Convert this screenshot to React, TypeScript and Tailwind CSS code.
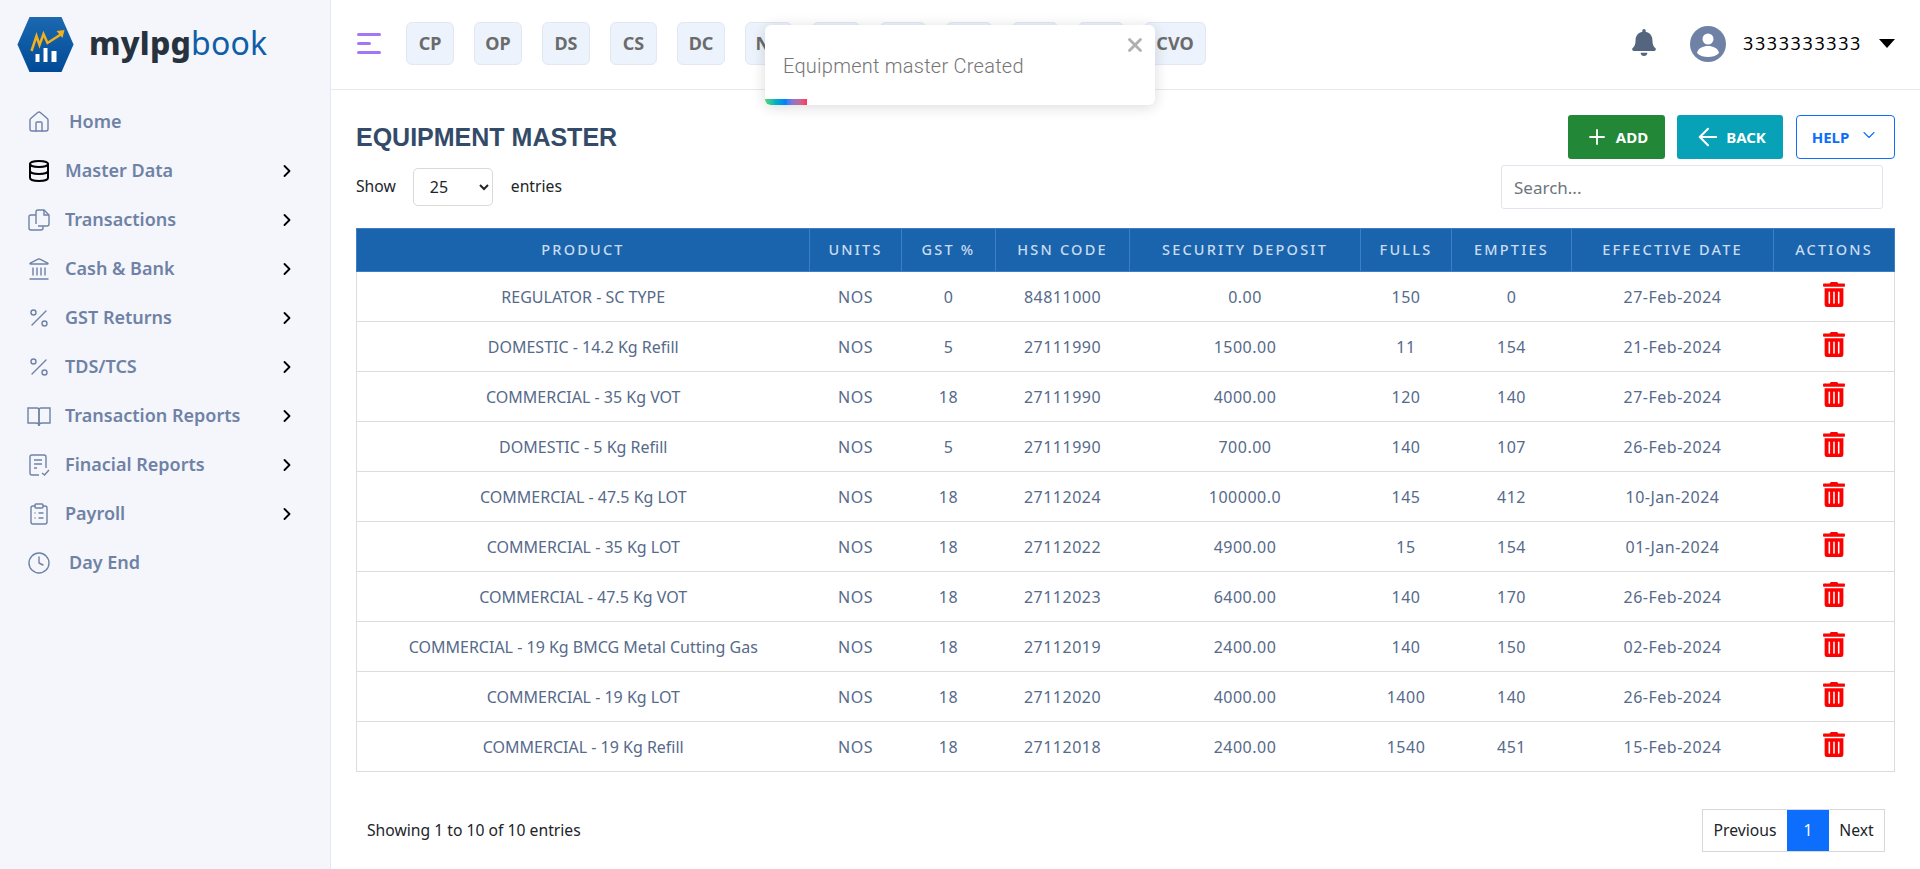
import { ArrowLeft, ChevronDown, ChevronRight, ClipboardList, Clock, Database, House, Landmark, Percent, Plus, X } from "lucide-react";
import { FaBell, FaTrashAlt } from "react-icons/fa";

const sans = "font-['Noto_Sans',sans-serif]";

type IconProps = { className?: string; strokeWidth?: number };

function CopyDocIcon({ className, strokeWidth }: IconProps) {
  return (
    <svg viewBox="0 0 24 24" fill="none" stroke="currentColor" strokeWidth={strokeWidth} className={className}>
      <path d="M9 16V4a2 2 0 0 1 2-2h6l5 5v9a2 2 0 0 1-2 2h-9" />
      <path d="M9 7H4a2 2 0 0 0-2 2v11a2 2 0 0 0 2 2h10a2 2 0 0 0 2-2v-2" />
      <path d="M17 2v5h5" />
    </svg>
  );
}

function OpenBookIcon({ className, strokeWidth }: IconProps) {
  return (
    <svg viewBox="0 0 24 24" fill="none" stroke="currentColor" strokeWidth={strokeWidth} className={className}>
      <path d="M12 22V6a2 2 0 0 0-2-2H1v15h8a3 3 0 0 1 3 3Z" />
      <path d="M12 22V6a2 2 0 0 1 2-2h9v15h-8a3 3 0 0 0-3 3Z" />
    </svg>
  );
}

function FileCheckIcon({ className, strokeWidth }: IconProps) {
  return (
    <svg viewBox="0 0 24 24" fill="none" stroke="currentColor" strokeWidth={strokeWidth} className={className}>
      <path d="M12 22H5a2 2 0 0 1-2-2V4a2 2 0 0 1 2-2h12a2 2 0 0 1 2 2v11" />
      <path d="M7 7h8M7 11h8M7 15h3" />
      <path d="m15 20 2.500 2L22 17" />
    </svg>
  );
}

const menu = [
  { label: "Home", icon: House, plain: true },
  { label: "Master Data", icon: Database, dark: true },
  { label: "Transactions", icon: CopyDocIcon },
  { label: "Cash & Bank", icon: Landmark },
  { label: "GST Returns", icon: Percent },
  { label: "TDS/TCS", icon: Percent },
  { label: "Transaction Reports", icon: OpenBookIcon },
  { label: "Finacial Reports", icon: FileCheckIcon },
  { label: "Payroll", icon: ClipboardList },
  { label: "Day End", icon: Clock, plain: true },
];

const chips = [
  { label: "CP", w: "w-[48px]" },
  { label: "OP", w: "w-[48px]" },
  { label: "DS", w: "w-[48px]" },
  { label: "CS", w: "w-[47px]" },
  { label: "DC", w: "w-[48px]" },
  { label: "NC", w: "w-[47px]" },
  { label: "", w: "w-[48px]" },
  { label: "", w: "w-[46px]" },
  { label: "", w: "w-[46px]" },
  { label: "", w: "w-[46px]" },
  { label: "", w: "w-[46px]" },
  { label: "CVO", w: "w-[62px]" },
];

const headers = ["Product", "Units", "GST %", "HSN Code", "Security Deposit", "Fulls", "Empties", "Effective Date", "Actions"];
const widths = ["w-[453px]", "w-[92px]", "w-[94px]", "w-[134px]", "w-[231px]", "w-[91px]", "w-[120px]", "w-[202px]", "w-[121px]"];

const rows = [
  ["REGULATOR - SC TYPE", "NOS", "0", "84811000", "0.00", "150", "0", "27-Feb-2024"],
  ["DOMESTIC - 14.2 Kg Refill", "NOS", "5", "27111990", "1500.00", "11", "154", "21-Feb-2024"],
  ["COMMERCIAL - 35 Kg VOT", "NOS", "18", "27111990", "4000.00", "120", "140", "27-Feb-2024"],
  ["DOMESTIC - 5 Kg Refill", "NOS", "5", "27111990", "700.00", "140", "107", "26-Feb-2024"],
  ["COMMERCIAL - 47.5 Kg LOT", "NOS", "18", "27112024", "100000.0", "145", "412", "10-Jan-2024"],
  ["COMMERCIAL - 35 Kg LOT", "NOS", "18", "27112022", "4900.00", "15", "154", "01-Jan-2024"],
  ["COMMERCIAL - 47.5 Kg VOT", "NOS", "18", "27112023", "6400.00", "140", "170", "26-Feb-2024"],
  ["COMMERCIAL - 19 Kg BMCG Metal Cutting Gas", "NOS", "18", "27112019", "2400.00", "140", "150", "02-Feb-2024"],
  ["COMMERCIAL - 19 Kg LOT", "NOS", "18", "27112020", "4000.00", "1400", "140", "26-Feb-2024"],
  ["COMMERCIAL - 19 Kg Refill", "NOS", "18", "27112018", "2400.00", "1540", "451", "15-Feb-2024"],
];

function Logo() {
  return (
    <svg viewBox="0 0 58 57" className="w-[59px] h-[57px] shrink-0">
      <defs>
        <linearGradient id="hex" x1="0" y1="0" x2="0" y2="1">
          <stop offset="0" stopColor="#1c69b0" />
          <stop offset="1" stopColor="#014a97" />
        </linearGradient>
      </defs>
      <path d="M13 1h32l12 27.500L45 56H13L1 28.500Z" fill="url(#hex)" />
      <path d="M19 38h4v8h-4zM27 32h4v14h-4zM35 35h5v11h-5z" fill="#fff" />
      <path d="m15 35 5-15 3 9 4-11 4 9 14-9" fill="none" stroke="#f2b01e" strokeWidth="2.500" />
      <path d="m40 15 8-1-2 8Z" fill="#f2b01e" />
    </svg>
  );
}

function Sidebar() {
  return (
    <aside className="w-[331px] shrink-0 bg-[#f4f6fb] border-r border-[#e6e8f0]">
      <div className="flex items-center h-[90px] pl-[16px] pb-[2px]">
        <Logo />
        <span className={`ml-[14px] mb-[2px] text-[32px] leading-none tracking-[0.2px] ${sans}`}>
          <span className="font-extrabold text-[#27323f]">mylpg</span>
          <span className="text-[#0f5ea8]">book</span>
        </span>
      </div>
      <nav className="flex flex-col pt-[7px]">
        {menu.map((item) => (
          <div key={item.label} className="flex items-center h-[49px]">
            <item.icon
              className={`ml-[27px] w-[24px] h-[24px] shrink-0 ${item.dark ? "text-black" : "text-[#6f82a6]"}`}
              strokeWidth={item.dark ? 2 : 1.4}
            />
            <span className={`${item.plain ? "ml-[18px]" : "ml-[14px]"} text-[18px] font-semibold text-[#6f82a6] ${sans}`}>
              {item.label}
            </span>
            {!item.plain && <ChevronRight className="ml-auto mr-[33px] w-[20px] h-[20px] text-black" strokeWidth={2.2} />}
          </div>
        ))}
      </nav>
    </aside>
  );
}

function Topbar() {
  return (
    <header className="relative flex items-center h-[90px] pl-[26px] pr-[25px] border-b border-[#e8e8ef] pb-[2px]">
      <div className="flex flex-col gap-[6px] w-[24px] mr-[25px]">
        <span className="h-[3px] w-[24px] rounded-full bg-[#a475f5]" />
        <span className="h-[3px] w-[14px] rounded-full bg-[#a475f5]" />
        <span className="h-[3px] w-[24px] rounded-full bg-[#a475f5]" />
      </div>
      <div className="flex gap-[20px]">
        {chips.map((c, i) => (
          <div
            key={i}
            className={`${c.w} h-[43px] flex items-center justify-center rounded-[6px] bg-[#edf3fc] border border-[#e2e8f2] text-[18px] font-bold text-[#6b6b6b] ${sans}`}
          >
            {c.label}
          </div>
        ))}
      </div>
      <FaBell className="ml-auto mb-[3px] w-[24px] h-[27px] text-[#54667f]" />
      <div className="ml-[34px] w-[36px] h-[36px] rounded-full bg-[#6f82a6] flex items-center justify-center overflow-hidden">
        <svg viewBox="0 0 36 36" className="w-[36px] h-[36px]">
          <circle cx="18" cy="13" r="5.500" fill="#fff" />
          <path d="M7 27c1-5 6-7 11-7s10 2 11 7c-3 3-7 4-11 4s-8-1-11-4Z" fill="#fff" />
        </svg>
      </div>
      <span className={`ml-[17px] text-[18px] tracking-[1.6px] text-black ${sans}`}>3333333333</span>
      <span className="ml-[17px] w-0 h-0 border-x-[8px] border-x-transparent border-t-[9px] border-t-black" />
    </header>
  );
}

function Toast() {
  return (
    <div className="absolute left-[765px] top-[25px] w-[390px] h-[80px] bg-white rounded-[6px] shadow-[0_2px_14px_rgba(0,0,0,0.15)] overflow-hidden z-10">
      <p className="pl-[18px] pt-[29px] text-[20px] leading-[24px] tracking-[0.25px] text-[#757575] font-['Roboto',sans-serif] font-light">Equipment master Created</p>
      <X className="absolute right-[9px] top-[9px] w-[22px] h-[22px] text-[#b0b0b0]" strokeWidth={3} />
      <div className="absolute left-0 bottom-0 h-[6px] w-[42px] bg-gradient-to-r from-[#4cd964] via-[#007aff] to-[#ff2d55]" />
    </div>
  );
}

export default function App() {
  return (
    <div className={`relative flex h-screen overflow-hidden bg-white ${sans}`}>
      <Sidebar />
      <Toast />
      <main className="flex-1 min-w-0">
        <Topbar />
        <div className="px-[25px]">
          <div className="flex items-center justify-between pt-[25px]">
            <h1 className="text-[25px] leading-[44px] font-bold text-[#334a68] font-['Liberation_Sans',sans-serif]">EQUIPMENT MASTER</h1>
            <div className="flex items-center">
              <button className="flex items-center justify-center w-[97px] h-[44px] rounded-[3px] bg-[#228838] text-white text-[15px] font-bold">
                <Plus className="w-[24px] h-[24px] mr-[7px]" strokeWidth={1.8} />
                ADD
              </button>
              <button className="ml-[12px] flex items-center justify-center w-[106px] h-[44px] rounded-[3px] bg-[#08a2b8] text-white text-[15px] font-bold">
                <ArrowLeft className="w-[28px] h-[28px] mr-[4px]" strokeWidth={1.8} />
                BACK
              </button>
              <button className="ml-[13px] flex items-center justify-center w-[99px] h-[44px] rounded-[4px] border border-[#0d6efd] bg-white text-[#0d6efd] text-[15px] font-bold">
                HELP
                <ChevronDown className="w-[20px] h-[20px] ml-[10px] mb-[5px]" strokeWidth={1.3} />
              </button>
            </div>
          </div>

          <div className="flex items-center justify-between pt-[6px] pr-[12px]">
            <div className="flex items-center text-[15.7px] text-[#212529]">
              <span>Show</span>
              <select defaultValue="25" className="ml-[17px] w-[80px] h-[38px] pl-[12px] rounded-[5px] border border-[#d9d9d9] bg-white text-[16px] text-[#212529]">
                <option value="25">25</option>
              </select>
              <span className="ml-[18px]">entries</span>
            </div>
            <input
              placeholder="Search..."
              className="w-[382px] h-[44px] px-[12px] rounded-[3px] border border-[#e2e3ec] text-[17px] placeholder:text-[#6c757d] outline-none"
            />
          </div>

          <table className="mt-[19px] w-[1538px] table-fixed border-collapse">
            <colgroup>
              {widths.map((w) => (
                <col key={w} className={w} />
              ))}
            </colgroup>
            <thead>
              <tr className="h-[43px] bg-[#1a64ae]">
                {headers.map((h) => (
                  <th key={h} className="border border-[#3a7fc8] text-center text-[14.5px] font-medium uppercase tracking-[2.2px] text-[#c9dcf0]">
                    {h}
                  </th>
                ))}
              </tr>
            </thead>
            <tbody>
              {rows.map((row) => (
                <tr key={row[0]} className="h-[50px]">
                  {row.map((cell, i) => (
                    <td
                      key={i}
                      className={`text-center text-[16px] text-[#566a8a] border-y border-[#dcdcdc] ${i === 0 ? "border-l" : "tracking-[0.5px]"}`}
                    >
                      {cell}
                    </td>
                  ))}
                  <td className="border-y border-r border-[#dcdcdc] pb-[4px]">
                    <FaTrashAlt className="mx-auto w-[22px] h-[25px] text-[#ff0000]" />
                  </td>
                </tr>
              ))}
            </tbody>
          </table>

          <div className="flex items-center justify-between mt-[37px] pl-[11px] pr-[10px] text-[15.7px] text-[#212529]">
            <span>Showing 1 to 10 of 10 entries</span>
            <div className="flex h-[43px] border border-[#d8d8d8]">
              <span className="w-[84px] flex items-center justify-center">Previous</span>
              <span className="w-[42px] flex items-center justify-center bg-[#0d6efd] text-white">1</span>
              <span className="w-[55px] flex items-center justify-center">Next</span>
            </div>
          </div>
        </div>
      </main>
    </div>
  );
}
